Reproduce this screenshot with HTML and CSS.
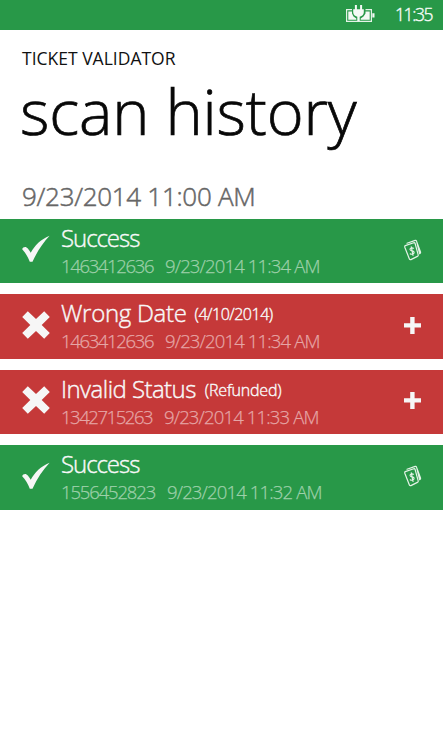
FILE: index.html
```
<!DOCTYPE html>
<html lang="en">
<head>
<meta charset="utf-8">
<title>Ticket Validator</title>
<link rel="stylesheet" href="styles.css">
</head>
<body>
<svg class="defs" width="0" height="0" aria-hidden="true">
  <symbol id="check" viewBox="0 0 28 28"><path d="M.2 14.300C.6 12.500 2.800 11.600 4.500 12.400 6.500 13.700 7.600 15.700 8.700 17.800 13 10.300 18.500 4.500 27.600.8 20.700 8 15.300 16.500 10.500 26.700H7.800C6 22 3.600 18 .2 14.300Z"/></symbol>
  <symbol id="cross" viewBox="0 0 28 28"><path d="M5.800.3 14 7.900 22.200.3 27.800 6 19.700 14 27.800 22 22.200 27.700 14 20.100 5.800 27.700.2 22 8.300 14 .2 6Z"/></symbol>
  <symbol id="plus" viewBox="0 0 17 17"><path d="M6.200 0H10.600V6.300H17V10.600H10.600V17H6.200V10.600H0V6.300H6.200Z"/></symbol>
  <symbol id="tickets" viewBox="0 0 18 22"><g fill="none" stroke="#e4f3e7" stroke-width="1.200" stroke-linejoin="round" stroke-linecap="round"><path d="M1.300 6.600 9.700 3.800Q10.800 3.500 11.100 4.500L14.200 15.900Q14.400 17 13.400 17.400L6.900 20.600Q5.800 21 5.400 20L.8 8.200Q.5 7 1.300 6.600Z"/><path d="M3 4.200 11.200 1.400Q12.200 1.200 12.500 2.200L16.600 13.200Q16.800 14.200 15.700 14.800M13 3.800 15.600 14.700"/><path d="M9.500 9.200C8 8.300 5.800 9 6.100 10.700 6.500 12.300 9.400 11.400 10 13 10.400 14.800 8 15.800 6.300 14.900M7.300 7.800 9 16.500"/></g></symbol>
</svg>
<header class="status">
  <svg class="battery" viewBox="0 0 30 18"><path fill="none" stroke="#e4f3e7" stroke-width="1.200" d="M7 4.600H1.600V16.400H26.400V4.600H20.500"/><path fill="#f4faf5" d="M3.300 6.500H7V8.500L8.500 11.500 11.300 13.500V14.800H3.300ZM24.700 6.500H20.500V8.500L18.500 11.500 15.700 13.500V14.800H24.700ZM27.300 8.300H29.500V12.500H27.300ZM9.900 0H11.900V4.300H15.100V0H17.100V4.300H18.800V7.500Q18.500 10.800 14.700 11.700V16H12.300V11.700Q8.500 10.800 8.200 7.500V4.300H9.900Z"/></svg>
  <span class="clock">11:35</span>
</header>
<main>
  <div class="app">TICKET VALIDATOR</div>
  <h1>scan history</h1>
  <h2>9/23/2014 11:00 AM</h2>
  <ul class="list">
    <li class="row ok">
      <svg class="mark"><use href="#check"/></svg>
      <div class="info">
        <div class="name"><span class="success">Success</span></div>
        <div class="meta"><span class="code">1463412636</span><span>9/23/2014 11:34 AM</span></div>
      </div>
      <svg class="tickets"><use href="#tickets"/></svg>
    </li>
    <li class="row bad">
      <svg class="mark"><use href="#cross"/></svg>
      <div class="info">
        <div class="name"><span class="wrong">Wrong Date</span><small class="when">(4/10/2014)</small></div>
        <div class="meta"><span class="code">1463412636</span><span>9/23/2014 11:34 AM</span></div>
      </div>
      <svg class="plus"><use href="#plus"/></svg>
    </li>
    <li class="row bad">
      <svg class="mark"><use href="#cross"/></svg>
      <div class="info">
        <div class="name"><span class="invalid">Invalid Status</span><small class="why">(Refunded)</small></div>
        <div class="meta refunded"><span class="code">1342715263</span><span>9/23/2014 11:33 AM</span></div>
      </div>
      <svg class="plus"><use href="#plus"/></svg>
    </li>
    <li class="row ok">
      <svg class="mark"><use href="#check"/></svg>
      <div class="info">
        <div class="name"><span class="success">Success</span></div>
        <div class="meta last"><span class="code">1556452823</span><span>9/23/2014 11:32 AM</span></div>
      </div>
      <svg class="tickets"><use href="#tickets"/></svg>
    </li>
  </ul>
</main>
</body>
</html>
```
FILE: styles.css
```
* { box-sizing: border-box; }
body { margin: 0; background: #fff; color: #111; font-family: "Open Sans", "Noto Sans", sans-serif; height: 738px; overflow: hidden; white-space: nowrap; }
.defs { display: block; }
.status { height: 29.500px; background: #289848; display: flex; justify-content: flex-end; padding-right: 10px; color: #f4faf5; }
.battery { width: 30px; height: 18px; margin: 5px 20px 0 0; }
.clock { width: 38px; font-size: 17.500px; line-height: 28px; letter-spacing: -1.400px; font-weight: 300; -webkit-text-stroke: .4px; }
.app { margin: 16.500px 0 0 22px; font-size: 17.500px; line-height: 24px; letter-spacing: 0; }
h1 { margin: 1px 0 0 20px; font-size: 63px; line-height: 80px; font-weight: 300; letter-spacing: -.15px; color: #080808; -webkit-text-stroke: .7px; }
h2 { margin: 26.500px 0 0 22px; font-size: 26px; line-height: 36px; font-weight: 300; letter-spacing: -.3px; color: #666; -webkit-text-stroke: .5px; }
.list { list-style: none; margin: 5px 0 0; padding: 0; display: flex; flex-direction: column; gap: 11px; }
.row { height: 64.600px; display: flex; padding-left: 22px; color: #f8f8f8; }
.ok { background: #289848; }
.bad { background: #c53939; }
.mark { width: 28px; height: 28px; margin-top: 16.500px; fill: #f6f6f6; }
.info { flex: 1; padding: 3px 0 0 11px; }
.name { height: 32px; line-height: 32px; font-size: 24px; font-weight: 300; display: flex; -webkit-text-stroke: .4px; }
.success { letter-spacing: -1.050px; }
.wrong { letter-spacing: -.3px; }
.invalid { letter-spacing: -.55px; }
.name small { font-size: 16px; font-weight: 300; line-height: 35px; margin-left: 8px; letter-spacing: -.5px; }
.name .why { margin-left: 9px; letter-spacing: -.2px; }
.meta { display: flex; font-size: 18.500px; line-height: 24px; font-weight: 300; letter-spacing: -.85px; color: #e5a6a6; -webkit-text-stroke: .25px; }
.ok .meta { color: #9ed0aa; }
.code { width: 104px; letter-spacing: -1.350px; }
.refunded .code { width: 103px; letter-spacing: -1.450px; }
.last .code { width: 106px; letter-spacing: -1.150px; }
.plus { width: 17px; height: 17px; margin: 22.500px 22px 0 0; fill: #f6f6f6; }
.tickets { width: 18px; height: 22px; margin: 20px 21px 0 0; }
```
